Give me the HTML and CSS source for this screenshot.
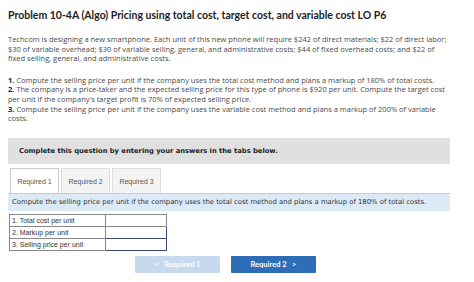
FILE: index.html
```html
<!DOCTYPE html>
<html lang="en">
<head>
    <meta charset="UTF-8">
    <title>Problem 10-4A</title>
    <link rel="stylesheet" href="styles.css">
</head>
<body>
    <div class="page">
        <h1 class="title">Problem 10-4A (Algo) Pricing using total cost, target cost, and variable cost LO P6</h1>

        <p class="text">Techcom is designing a new smartphone. Each unit of this new phone will require $242 of direct materials; $22 of direct labor; $30 of variable overhead; $30 of variable selling, general, and administrative costs; $44 of fixed overhead costs; and $22 of fixed selling, general, and administrative costs.</p>

        <p class="text">
            <b>1.</b> Compute the selling price per unit if the company uses the total cost method and plans a markup of 180% of total costs.<br>
            <b>2.</b> The company is a price-taker and the expected selling price for this type of phone is $920 per unit. Compute the target cost per unit if the company's target profit is 70% of expected selling price.<br>
            <b>3.</b> Compute the selling price per unit if the company uses the variable cost method and plans a markup of 200% of variable costs.
        </p>

        <div class="notice">Complete this question by entering your answers in the tabs below.</div>

        <div class="tabs">
            <div class="tab active">Required 1</div>
            <div class="tab">Required 2</div>
            <div class="tab">Required 3</div>
        </div>

        <div class="task">Compute the selling price per unit if the company uses the total cost method and plans a markup of 180% of total costs.</div>

        <table class="answers">
            <tr>
                <td class="label">1. Total cost per unit</td>
                <td class="value"></td>
            </tr>
            <tr>
                <td class="label">2. Markup per unit</td>
                <td class="value input"></td>
            </tr>
            <tr>
                <td class="label">3. Selling price per unit</td>
                <td class="value input"></td>
            </tr>
        </table>

        <div class="nav">
            <button class="nav-btn prev">&lt;&nbsp;&nbsp;&nbsp;Required 1</button>
            <button class="nav-btn next">Required 2&nbsp;&nbsp;&nbsp;&gt;</button>
        </div>
    </div>
</body>
</html>
```

FILE: styles.css
```css
body {
    margin: 0;
    background: #fff;
    font-family: "Open Sans", "Liberation Sans", sans-serif;
    color: #333;
}

.page {
    width: 442px;
    padding: 8px;
}

.title {
    margin: 0;
    font-family: Lato, "Liberation Sans", sans-serif;
    font-size: 10.5px;
    font-weight: bold;
    color: #222;
    line-height: 14px;
    white-space: nowrap;
}

.text {
    margin: 13px 0 0 0;
    font-size: 7.5px;
    line-height: 9.6px;
    color: #4a4a4a;
}

.text + .text {
    margin-top: 12px;
}

.text b {
    color: #222;
}

.notice {
    margin-top: 14px;
    height: 26px;
    padding-left: 11px;
    background: #e0e0e0;
    font-family: "DejaVu Sans", Verdana, sans-serif;
    font-size: 6.75px;
    font-weight: bold;
    line-height: 26px;
    color: #222;
}

.tabs {
    display: flex;
    gap: 2px;
    margin-top: 4px;
    padding-left: 2px;
    height: 25px;
}

.tab {
    width: 47px;
    border: 1px solid #ddd;
    border-bottom: none;
    background: #f4f4f4;
    font-family: "Liberation Sans", Arial, sans-serif;
    font-size: 7px;
    color: #555;
    text-align: center;
    line-height: 25px;
}

.tab.active {
    background: #fff;
    border-color: #ccc;
}

.task {
    height: 17px;
    padding-left: 4px;
    background: #dceaf7;
    border-top: 1px solid #c8ccd2;
    font-family: "DejaVu Sans", Verdana, sans-serif;
    font-size: 6.85px;
    line-height: 17px;
    color: #333;
    white-space: nowrap;
}

.answers {
    margin: 3px 0 0 1px;
    border-collapse: collapse;
    font-family: "Liberation Sans", Arial, sans-serif;
    font-size: 7px;
    color: #333;
}

.answers td {
    height: 11px;
    padding: 0 2px;
    border: 1px solid #888;
}

.answers .label {
    width: 91px;
}

.answers .value {
    width: 56px;
}

.answers .input {
    border: 1px solid #3a4e6e;
}

.nav {
    display: flex;
    gap: 11px;
    margin-top: 5px;
    padding-left: 127px;
}

.nav-btn {
    width: 85px;
    height: 17px;
    border: none;
    border-radius: 1px;
    font-family: Lato, "Liberation Sans", sans-serif;
    font-size: 7.5px;
    font-weight: bold;
    color: #fff;
}

.prev {
    background: #c6d9ee;
}

.next {
    background: #2f6db7;
}
```
